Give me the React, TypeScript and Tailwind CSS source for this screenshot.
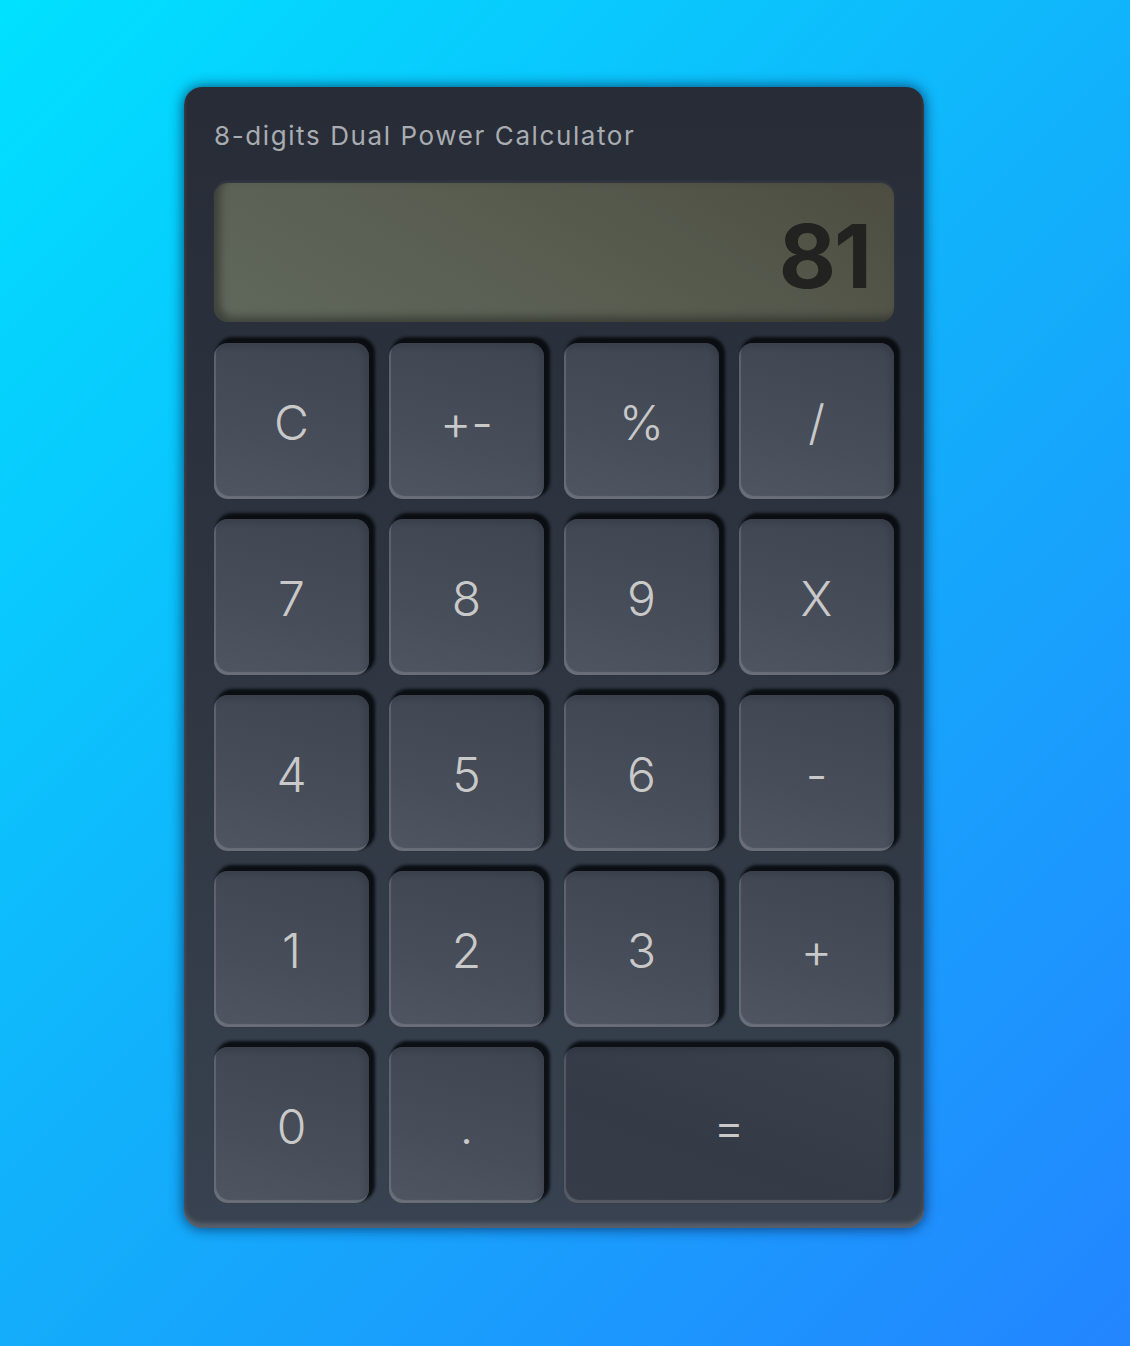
import React from "react";

const keys: { label: string; wide?: boolean; dark?: boolean }[] = [
  { label: "C" },
  { label: "+-" },
  { label: "%" },
  { label: "/" },
  { label: "7" },
  { label: "8" },
  { label: "9" },
  { label: "X" },
  { label: "4" },
  { label: "5" },
  { label: "6" },
  { label: "-" },
  { label: "1" },
  { label: "2" },
  { label: "3" },
  { label: "+" },
  { label: "0" },
  { label: "." },
  { label: "=", wide: true, dark: true },
];

export default function App() {
  return (
    <div
      className="min-h-[1346px] w-full bg-[linear-gradient(135deg,#00e1ff_0%,#12b0fb_50%,#2385ff_100%)] pl-[184px] pt-[87px]"
      style={{ fontFamily: "Inter, 'Open Sans', sans-serif" }}
    >
      <div className="w-[740px] rounded-[18px] bg-[linear-gradient(180deg,#272c37_0%,#2f3641_50%,#384250_100%)] px-[30px] pb-[25px] pt-[29px] shadow-[0_0_14px_rgba(0,20,60,0.75),inset_0_-5px_4px_rgba(255,255,255,0.16)]">
        <div className="h-[40px] text-[26px] leading-[40px] tracking-[1.6px] text-[#a9acb0]">
          8-digits Dual Power Calculator
        </div>
        <div className="mt-[27px] flex h-[139px] items-center justify-end rounded-[14px] bg-[linear-gradient(30deg,#60685c_0%,#585d50_50%,#4d4d41_100%)] pr-[24px] pt-[6px] shadow-[inset_6px_-5px_8px_rgba(0,0,0,0.35),0_-2px_3px_rgba(255,255,255,0.06)]">
          <span className="text-[88px] font-bold leading-none tracking-[-2px] text-[#222320]">
            81
          </span>
        </div>
        <div className="mt-[21px] grid grid-cols-4 gap-x-[20px] gap-y-[20px]">
          {keys.map((k) => (
            <div
              key={k.label}
              className={
                "flex h-[156px] items-center justify-center rounded-[14px] pt-[4px] text-[48px] font-light text-[#c9c9c9] shadow-[4px_-4px_3px_2px_rgba(5,8,12,0.85),inset_2px_-3px_1px_rgba(255,255,255,0.16),inset_-3px_3px_6px_rgba(0,0,0,0.12)] " +
                (k.wide ? "col-span-2 " : "") +
                (k.dark
                  ? "bg-[linear-gradient(200deg,#3b424d_0%,#353b46_60%,#373d48_100%)]"
                  : "bg-[linear-gradient(195deg,#3e4450_0%,#474d59_60%,#4f5561_100%)]")
              }
            >
              {k.label}
            </div>
          ))}
        </div>
      </div>
    </div>
  );
}
